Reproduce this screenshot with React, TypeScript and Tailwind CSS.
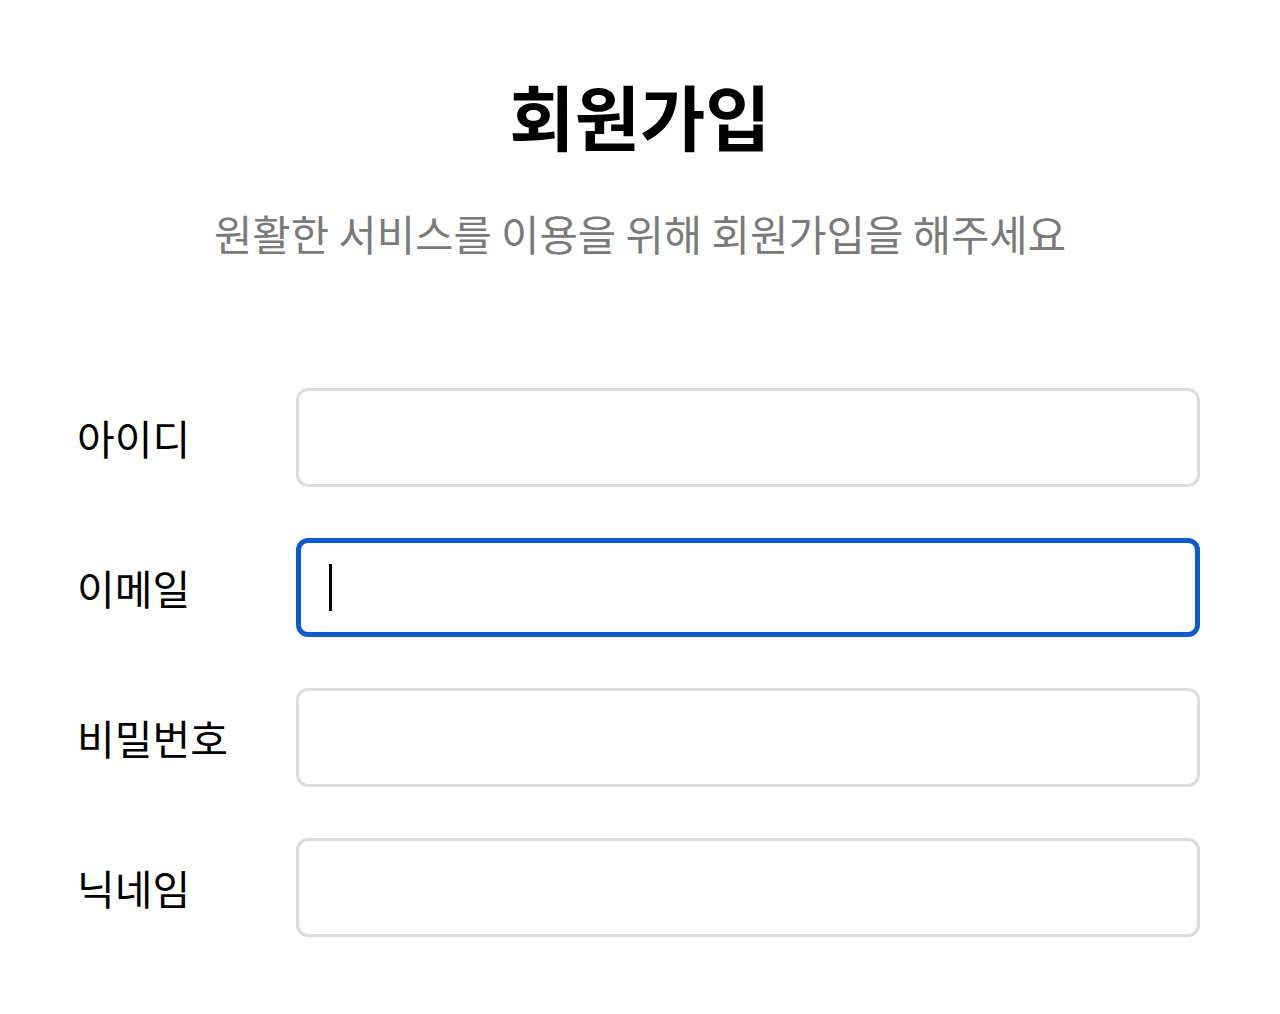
const fields = [
  { label: "아이디", type: "text", focused: false },
  { label: "이메일", type: "email", focused: true },
  { label: "비밀번호", type: "password", focused: false },
  { label: "닉네임", type: "text", focused: false },
];

export default function App() {
  return (
    <div
      className="min-h-[1014px] w-full bg-white flex flex-col items-center"
      style={{ fontFamily: '"Noto Sans CJK KR", "Noto Sans", sans-serif' }}
    >
      <h1 className="mt-[64px] text-[71px] leading-[100px] font-bold text-black">회원가입</h1>
      <p className="mt-[39px] text-[41.7px] leading-[60px] text-[#7a7a7a]">
        원활한 서비스를 이용을 위해 회원가입을 해주세요
      </p>

      <form className="mt-[125px] w-full pl-[77px] pr-[80px] flex flex-col gap-[51px]">
        {fields.map((f) => (
          <div key={f.label} className="flex items-center">
            <label className="w-[219px] shrink-0 text-[41px] text-black">{f.label}</label>
            <div className="relative flex-1">
              <input
                type={f.type}
                className={
                  f.focused
                    ? "w-full h-[99px] rounded-[12px] border-[5px] border-[#0a5ccf] outline-none bg-white px-8 caret-transparent"
                    : "w-full h-[99px] rounded-[12px] border-[3px] border-[#dcdcdc] outline-none bg-white px-8"
                }
              />
              {f.focused && (
                <span className="absolute left-[33px] top-[26px] h-[47px] w-[3px] bg-black" />
              )}
            </div>
          </div>
        ))}
      </form>
    </div>
  );
}
